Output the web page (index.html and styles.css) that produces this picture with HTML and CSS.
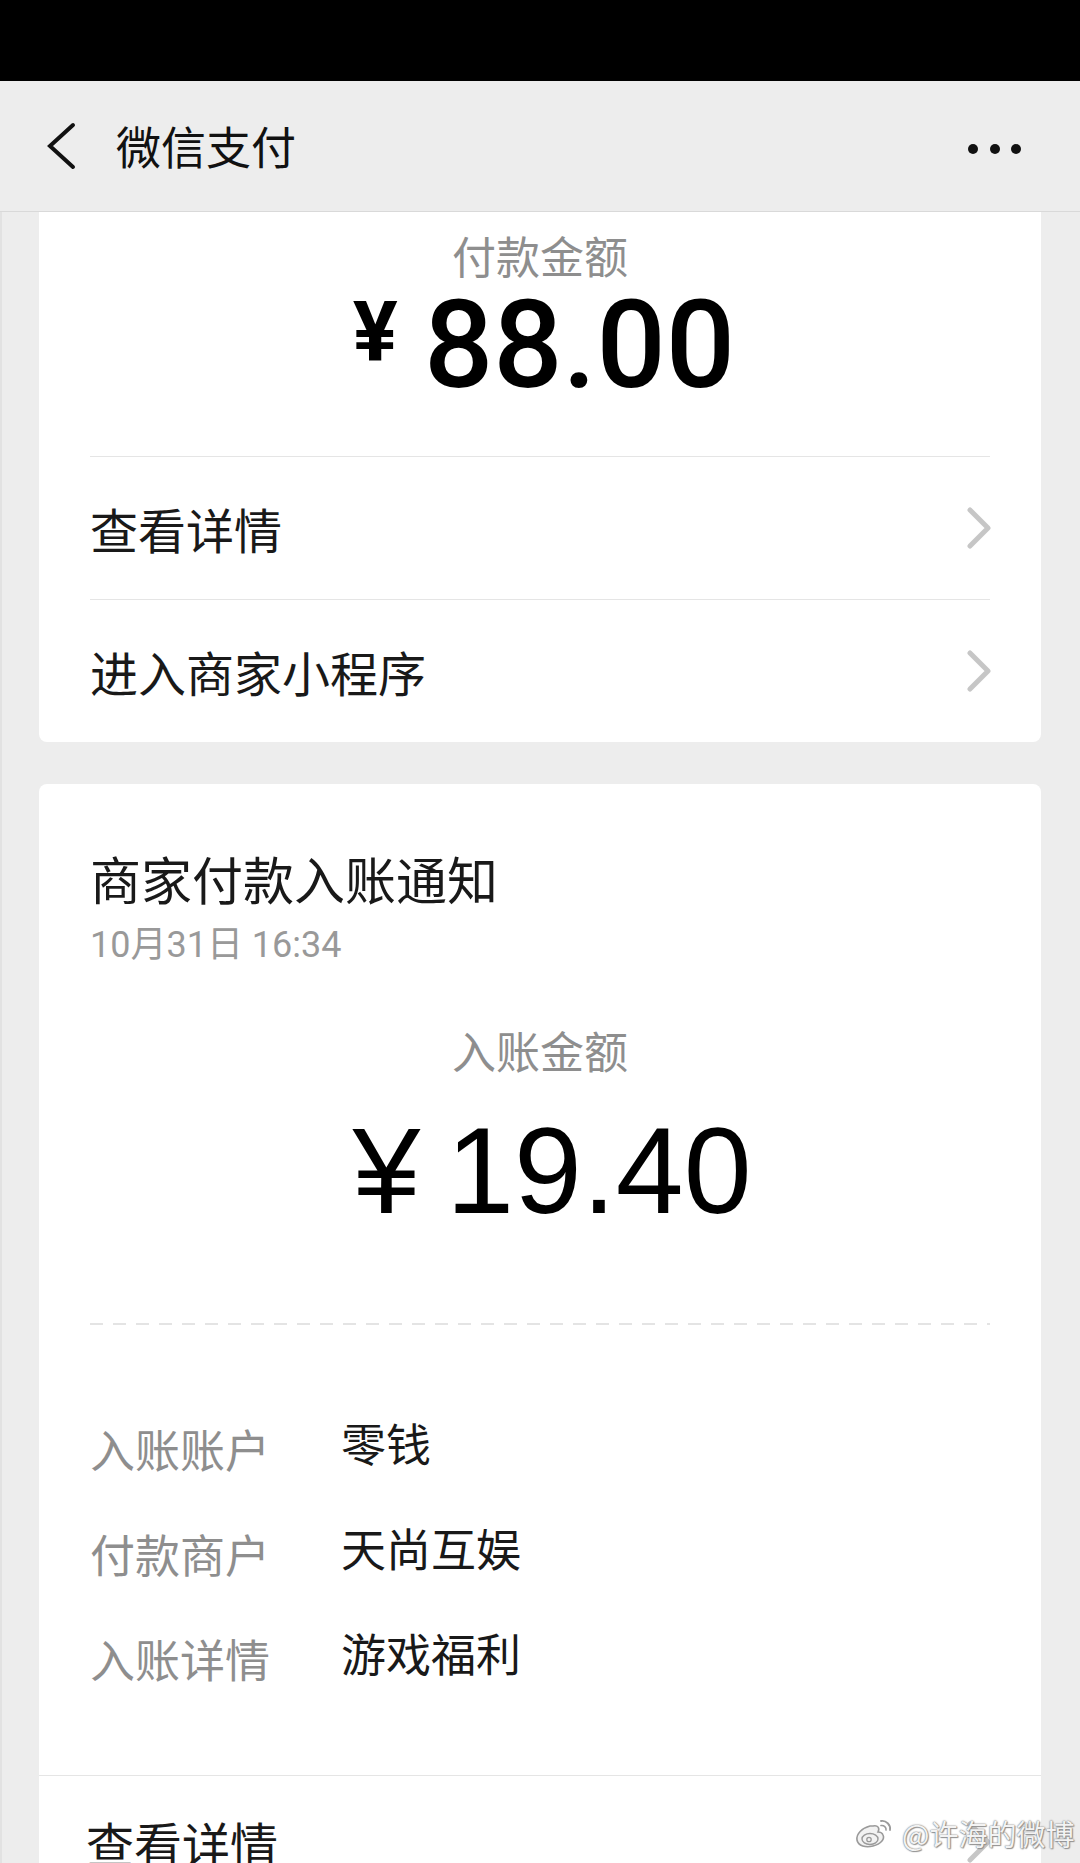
FILE: index.html
```html
<!DOCTYPE html>
<html lang="zh-CN">
<head>
<meta charset="utf-8">
<title>微信支付</title>
<link rel="stylesheet" href="styles.css">
</head>
<body>
<div class="status"></div>
<header class="nav">
  <svg class="back" width="30" height="48" viewBox="0 0 30 48"><polyline points="27,3 4,24 27,45" fill="none" stroke="#111" stroke-width="4" stroke-linejoin="miter" stroke-linecap="round"/></svg>
  <div class="nav-title">微信支付</div>
  <div class="more"><i></i><i></i><i></i></div>
</header>
<main class="content">
  <section class="card card-top">
    <div class="pay-label">付款金额</div>
    <div class="pay-amount"><span class="pay-yen">¥</span><span class="pay-num">88.00</span></div>
    <div class="link-list">
      <div class="link-row"><span>查看详情</span><svg class="chev" width="26" height="42" viewBox="0 0 26 42"><polyline points="4,3 22,21 4,39" fill="none" stroke="#c6c6c6" stroke-width="5" stroke-linecap="round" stroke-linejoin="round"/></svg></div>
      <div class="link-row"><span>进入商家小程序</span><svg class="chev" width="26" height="42" viewBox="0 0 26 42"><polyline points="4,3 22,21 4,39" fill="none" stroke="#c6c6c6" stroke-width="5" stroke-linecap="round" stroke-linejoin="round"/></svg></div>
    </div>
  </section>
  <section class="card card-notice">
    <div class="notice-title">商家付款入账通知</div>
    <div class="notice-date">10月31日 16:34</div>
    <div class="income-label">入账金额</div>
    <div class="income-amount"><span class="income-yen">¥</span>19.40</div>
    <div class="dash"></div>
    <div class="info">
      <div class="info-row"><div class="info-key">入账账户</div><div class="info-val">零钱</div></div>
      <div class="info-row"><div class="info-key">付款商户</div><div class="info-val">天尚互娱</div></div>
      <div class="info-row"><div class="info-key">入账详情</div><div class="info-val">游戏福利</div></div>
    </div>
    <div class="link-row link-full"><span>查看详情</span><svg class="chev" width="26" height="42" viewBox="0 0 26 42"><polyline points="4,3 22,21 4,39" fill="none" stroke="#c6c6c6" stroke-width="5" stroke-linecap="round" stroke-linejoin="round"/></svg></div>
  </section>
</main>
<div class="watermark">
  <svg class="weibo" width="40" height="32" viewBox="0 0 40 32">
    <path d="M16 9 C8 11 2 17 3 23 C4 29 12 31 19 29 C27 27 31 22 29 18 C28 15 25 15 24 15 C26 11 24 8 19 9 Z" fill="#f2f2f2" stroke="#9a9a9a" stroke-width="1.6"/>
    <ellipse cx="16" cy="22" rx="8" ry="5.5" fill="#f2f2f2" stroke="#9a9a9a" stroke-width="1.4"/>
    <circle cx="15" cy="22.5" r="2.2" fill="none" stroke="#9a9a9a" stroke-width="1.3"/>
    <path d="M27 4 C32 3 37 8 36 13" fill="none" stroke="#9a9a9a" stroke-width="1.8" stroke-linecap="round"/>
    <path d="M27 8.5 C30 8 32.5 10.5 32 13" fill="none" stroke="#9a9a9a" stroke-width="1.6" stroke-linecap="round"/>
  </svg>
  <span class="wm-text">@许海的微博</span>
</div>
</body>
</html>
```
FILE: styles.css
```css
html, body {
  margin: 0;
  padding: 0;
}
body {
  width: 1080px;
  height: 1863px;
  overflow: hidden;
  background: #ededed;
  font-family: "Noto Sans CJK SC", "Noto Sans", sans-serif;
  color: #191919;
  position: relative;
  box-shadow: inset 2px 0 0 #e2e2e2;
}
.status {
  height: 81px;
  background: #000;
}
.nav {
  height: 130px;
  border-bottom: 1px solid #d9d9d9;
  background: #ededed;
  display: flex;
  align-items: center;
  padding: 0 59px 0 46px;
}
.back {
  display: block;
  flex: none;
}
.nav-title {
  margin-left: 40px;
  font-size: 45px;
  line-height: 60px;
  color: #111;
  flex: 1;
}
.more {
  display: flex;
  gap: 11.5px;
  margin-top: 5px;
}
.more i {
  display: block;
  width: 10px;
  height: 10px;
  border-radius: 50%;
  background: #111;
}
.content {
  padding: 0 39px;
}
.card {
  background: #fff;
  padding: 0 51px;
}
.card-top {
  border-radius: 0 0 8px 8px;
  padding-top: 13px;
}
.pay-label,
.income-label {
  text-align: center;
  font-size: 44px;
  line-height: 60px;
  color: #8e8e8e;
}
.pay-amount {
  display: flex;
  justify-content: center;
  align-items: flex-start;
  font-family: Roboto, "Liberation Sans", sans-serif;
  color: #000;
  line-height: 1;
  height: 122px;
  padding-left: 8px;
}
.pay-yen {
  font-size: 84px;
  font-weight: 700;
  margin-top: 6px;
  margin-right: 26px;
}
.pay-num {
  font-size: 122px;
  font-weight: 500;
}
.link-list {
  margin-top: 49px;
}
.link-row {
  height: 142px;
  border-top: 1px solid #e5e5e5;
  display: flex;
  align-items: center;
  justify-content: space-between;
  font-size: 48px;
  line-height: 60px;
  color: #191919;
}
.chev {
  display: block;
  margin-right: -2px;
}
.card-notice {
  margin-top: 42px;
  border-radius: 8px;
  padding-top: 64px;
}
.notice-title {
  font-size: 51px;
  line-height: 60px;
  color: #191919;
}
.notice-date {
  margin-top: 15px;
  font-family: Roboto, "Noto Sans CJK SC", sans-serif;
  font-size: 36px;
  line-height: 44px;
  color: #999;
}
.income-label {
  margin-top: 53px;
}
.income-amount {
  margin-top: 31px;
  text-align: center;
  padding-left: 24px;
  font-family: "Liberation Sans", Arial, sans-serif;
  font-size: 122px;
  line-height: 120px;
  color: #000;
}
.income-yen {
  margin-right: 26px;
}
.dash {
  margin-top: 92px;
  height: 2px;
  background: repeating-linear-gradient(90deg, #e4e4e4 0 13px, transparent 13px 23px);
}
.info {
  margin-top: 88px;
  display: flex;
  flex-direction: column;
  gap: 39px;
}
.info-row {
  display: flex;
  align-items: flex-start;
  font-size: 45px;
  line-height: 60px;
}
.info-key {
  width: 251px;
  flex: none;
  padding-top: 6px;
  color: #8e8e8e;
}
.info-val {
  color: #191919;
}
.link-full {
  margin: 86px -51px 0;
  padding: 36px 51px 0 47px;
  align-items: flex-start;
  height: 106px;
}
.link-full .chev {
  margin-top: 9px;
}
.watermark {
  position: absolute;
  left: 854px;
  top: 1813px;
  display: flex;
  align-items: center;
  gap: 8px;
}
.weibo {
  display: block;
}
.wm-text {
  font-size: 29px;
  line-height: 40px;
  color: #f3f3f3;
  text-shadow: 0 0 1px #7a7a7a, 0 0 2px #8a8a8a, 1px 1px 1px #999;
}
```
